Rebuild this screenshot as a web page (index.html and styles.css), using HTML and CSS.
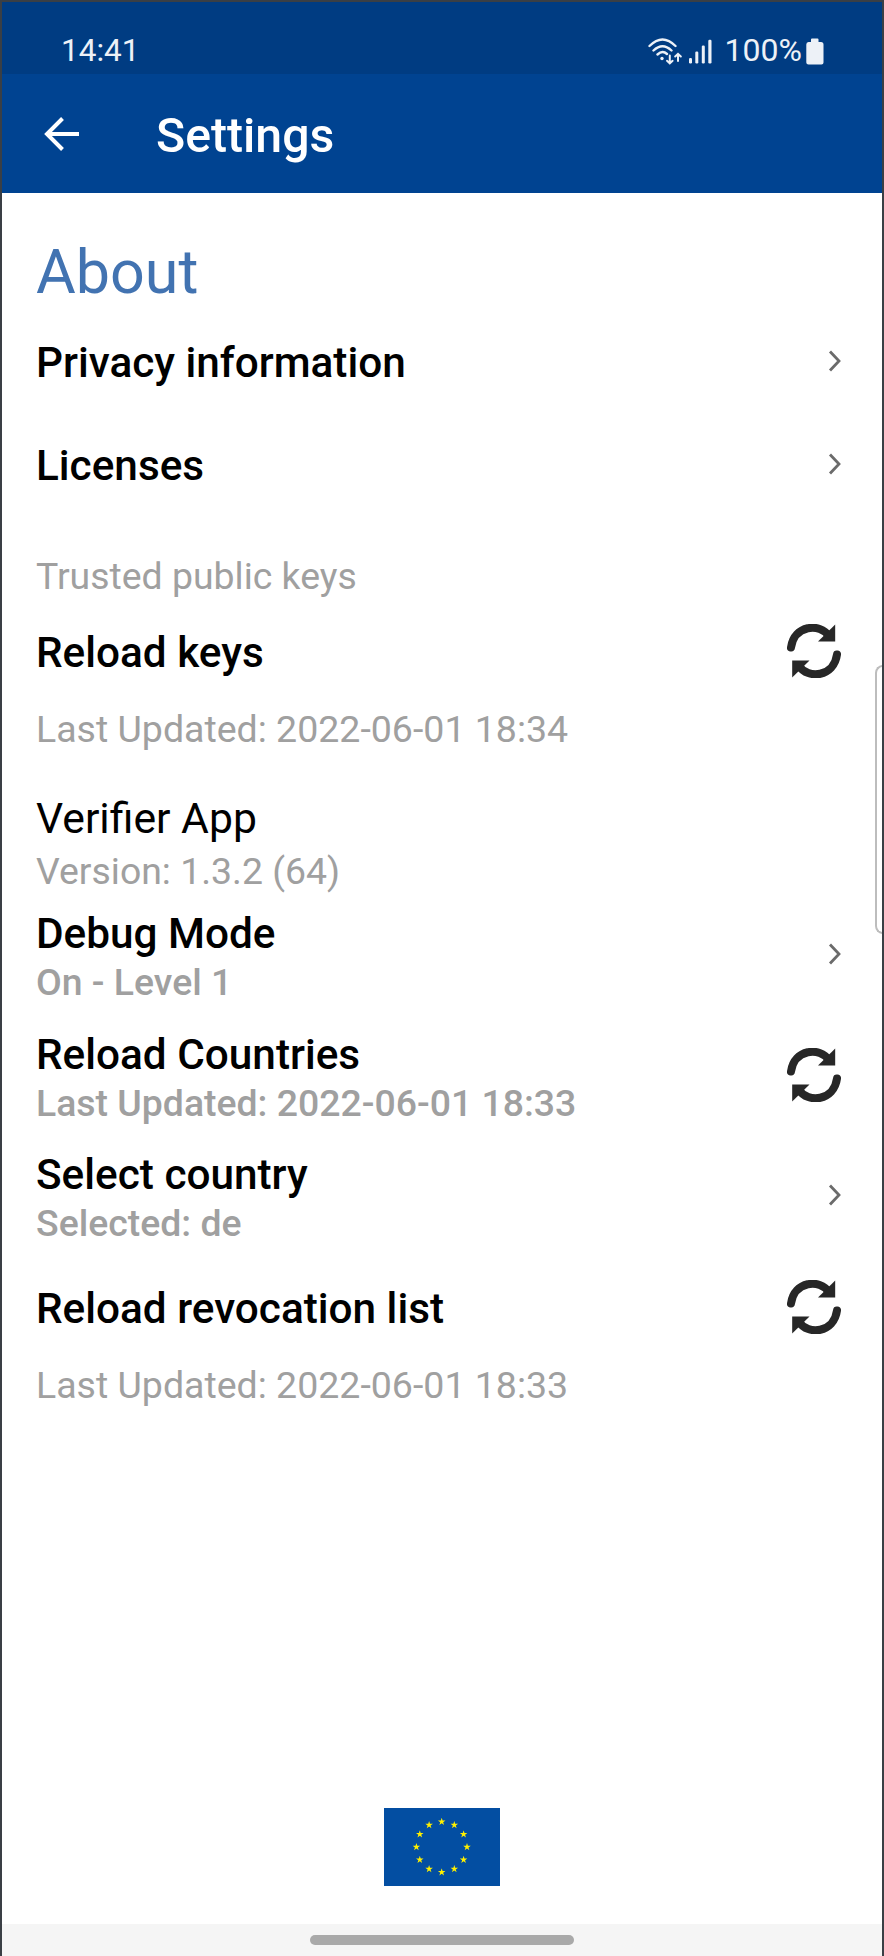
FILE: index.html
```html
<!DOCTYPE html>
<html lang="en">
<head>
<meta charset="utf-8">
<title>Settings</title>
<link rel="stylesheet" href="styles.css">
</head>
<body>
<svg class="defs" width="0" height="0" aria-hidden="true">
  <symbol id="chevron" viewBox="0 0 14 22"><path d="M2 1.500 11 11 2 20.500" fill="none" stroke="#6b6b6b" stroke-width="2.800"/></symbol>
  <symbol id="reload" viewBox="0 0 54 54">
    <path d="M4 23.500C7 1 33-1.500 42 12" fill="none" stroke="#272727" stroke-width="8" stroke-linecap="round"/>
    <path d="M48.200 .5V17.500H31Z" fill="#272727"/>
    <path d="M50 30.500C47 53 21 55.500 12 42" fill="none" stroke="#272727" stroke-width="8" stroke-linecap="round"/>
    <path d="M5.200 53.500V36.500H22.500Z" fill="#272727"/>
  </symbol>
  <symbol id="star" viewBox="-1 -1 2 2"><path d="M0-1 .2245-.309H.951L.363.118.588.809 0 .382-.588.809-.363.118-.951-.309H-.2245Z" fill="#fff000"/></symbol>
</svg>
<div class="phone">
  <header class="status">
    <span class="clock">14:41</span>
    <div class="indicators">
      <svg class="wifi" viewBox="0 0 34 28" fill="none" stroke="#edf1f7" stroke-width="2.400" stroke-linecap="round">
        <path d="M1.500 8Q14.500-5 27.500 8M5.500 12.500Q14.500 4 23.500 12.500M9.500 16.500Q14.500 12 19 16"/>
        <circle cx="14" cy="20.500" r="1.700" fill="#edf1f7" stroke="none"/>
        <path d="M21.800 17.500V25M19 22.800 21.800 25.300 24.600 22.800M30 23V16M27.200 18.500 30 15.800 32.800 18.500" stroke-width="2"/>
      </svg>
      <svg class="signal" viewBox="0 0 23 25" fill="#edf1f7"><rect y="19" width="3" height="5.500" rx="1.200"/><rect x="6.300" y="12.500" width="3" height="12" rx="1.200"/><rect x="12.800" y="6.500" width="3" height="18" rx="1.200"/><rect x="19.300" y=".8" width="3.200" height="23.700" rx="1.200"/></svg>
      <span class="percent">100%</span>
      <svg class="battery" viewBox="0 0 18 27" fill="#edf1f7"><path d="M5 4V1.500Q5 .5 6 .5H11.500Q12.500 .5 12.500 1.500V4H15Q17.500 4 17.500 6.500V24.500Q17.500 26.500 15.500 26.500H2.500Q.3 26.500 .3 24.500V6.500Q.3 4 2.500 4Z"/></svg>
    </div>
  </header>
  <div class="toolbar">
    <svg class="back" viewBox="0 0 36 34" fill="none" stroke="#fff" stroke-width="4"><path d="M35 17H3M18.500 1.500 3 17 18.500 32.500"/></svg>
    <h1 class="title">Settings</h1>
  </div>
  <main class="content">
    <h2 class="section">About</h2>
    <div class="row nav"><span class="label">Privacy information</span><svg class="chevron"><use href="#chevron"/></svg></div>
    <div class="row nav"><span class="label">Licenses</span><svg class="chevron"><use href="#chevron"/></svg></div>
    <p class="note keys">Trusted public keys</p>
    <div class="row action"><span class="label">Reload keys</span><svg class="reload"><use href="#reload"/></svg></div>
    <p class="note updated">Last Updated: 2022-06-01 18:34</p>
    <p class="app">Verifier App</p>
    <p class="note version">Version: 1.3.2 (64)</p>
    <div class="group">
      <div class="row double"><div class="text"><span class="label">Debug Mode</span><span class="sub">On - Level 1</span></div><svg class="chevron"><use href="#chevron"/></svg></div>
      <div class="row double"><div class="text"><span class="label">Reload Countries</span><span class="sub">Last Updated: 2022-06-01 18:33</span></div><svg class="reload"><use href="#reload"/></svg></div>
      <div class="row double"><div class="text"><span class="label">Select country</span><span class="sub">Selected: de</span></div><svg class="chevron"><use href="#chevron"/></svg></div>
    </div>
    <div class="row action"><span class="label">Reload revocation list</span><svg class="reload"><use href="#reload"/></svg></div>
    <p class="note updated">Last Updated: 2022-06-01 18:33</p>
    <svg class="flag" viewBox="0 0 116 78">
      <rect width="116" height="78" fill="#034ea2"/>
      <use href="#star" x="53.700" y="9.700" width="8" height="8"/><use href="#star" x="66.300" y="13" width="8" height="8"/><use href="#star" x="75.600" y="22.300" width="8" height="8"/><use href="#star" x="79" y="35" width="8" height="8"/><use href="#star" x="75.600" y="47.700" width="8" height="8"/><use href="#star" x="66.300" y="57" width="8" height="8"/><use href="#star" x="53.700" y="60.300" width="8" height="8"/><use href="#star" x="41.100" y="57" width="8" height="8"/><use href="#star" x="31.800" y="47.700" width="8" height="8"/><use href="#star" x="28.400" y="35" width="8" height="8"/><use href="#star" x="31.800" y="22.300" width="8" height="8"/><use href="#star" x="41.100" y="13" width="8" height="8"/>
    </svg>
  </main>
  <footer class="gesture"><div class="pill"></div></footer>
  <div class="edge-handle"></div>
</div>
</body>
</html>
```
FILE: styles.css
```css
* { box-sizing: border-box; }
body { margin: 0; font-family: Roboto, sans-serif; background: #fff; }
h1, h2, p { margin: 0; }
svg { display: block; flex: none; }
.defs { position: absolute; }
.phone {
  position: relative;
  display: flex;
  flex-direction: column;
  width: 884px;
  height: 1956px;
  overflow: hidden;
  border: 2px solid #3a3f45;
  border-bottom: 0;
  white-space: nowrap;
}
.status {
  display: flex;
  justify-content: space-between;
  height: 72px;
  padding: 29px 58px 0 59px;
  background: #003c82;
  color: #edf1f7;
  font-size: 32px;
  line-height: 38px;
}
.clock { padding-top: 1px; font-size: 31.500px; }
.indicators { display: flex; }
.wifi { width: 34px; height: 28px; margin: 7px 7px 0 0; }
.signal { width: 23px; height: 25px; margin: 8px 13px 0 0; }
.battery { width: 18px; height: 27px; margin: 7px 0 0 4px; }
.toolbar {
  display: flex;
  align-items: center;
  height: 119px;
  padding-left: 42px;
  background: #004391;
  color: #fff;
}
.back { width: 36px; height: 34px; }
.title { margin: 5px 0 0 76px; font-size: 48.200px; font-weight: 500; line-height: 56px; }
.content {
  display: flex;
  flex-direction: column;
  flex: 1;
  padding: 43px 42px 0 34px;
}
.section { margin-bottom: 2px; color: #4273b1; font-size: 61px; font-weight: 400; line-height: 72px; }
.row { display: flex; align-items: center; justify-content: space-between; }
.label { color: #000; font-size: 42.300px; font-weight: 500; line-height: 50px; }
.nav { height: 102.600px; }
.nav .label, .action .label { padding-top: 4px; }
.chevron { width: 14px; height: 22px; margin-right: -2px; }
.reload { width: 54px; height: 54px; margin-right: -1px; }
.note { color: #a0a0a0; font-size: 37.500px; line-height: 44px; }
.keys { margin-top: 39px; font-size: 37.400px; }
.action { height: 106px; }
.updated { margin-top: 3px; }
.app { margin-top: 42px; color: #000; font-size: 42.700px; line-height: 50px; }
.version { margin-top: 6px; font-size: 37.400px; }
.group { display: flex; flex-direction: column; gap: 24.500px; margin-top: 15px; }
.double { height: 96.300px; }
.double .chevron { margin-bottom: 5px; }
.double .reload { margin-bottom: 5px; }
.text { display: flex; flex-direction: column; gap: 1px; }
.sub { color: #a0a0a0; font-size: 37.400px; font-weight: 500; line-height: 44px; }
.group + .action { margin-top: 8px; }
.flag { width: 116px; height: 78px; margin: auto 0 38px 348px; }
.gesture { display: flex; justify-content: center; height: 32px; padding-top: 11px; background: #f5f5f5; }
.pill { width: 264px; height: 10px; border-radius: 5px; background: #a9a9a9; }
.edge-handle {
  position: absolute;
  right: -2px;
  top: 663px;
  width: 9px;
  height: 269px;
  border: 2px solid #bdbdbd;
  border-right: 0;
  border-radius: 8px 0 0 8px;
}
```
